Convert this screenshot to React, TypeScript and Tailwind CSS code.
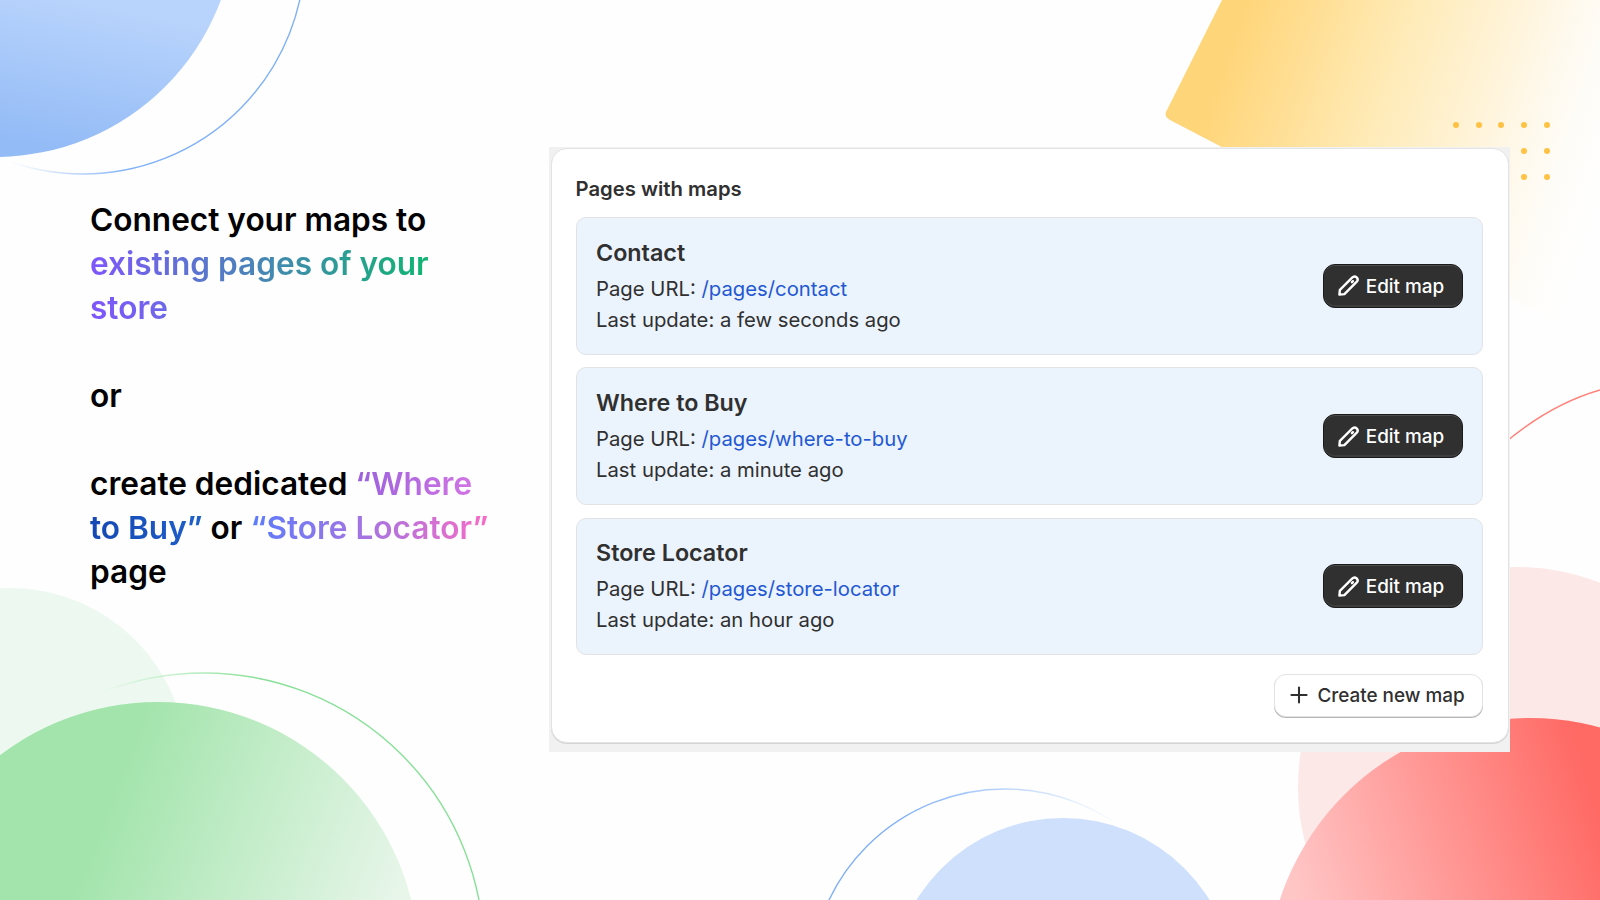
import { Plus } from "lucide-react";

type PageRow = {
  title: string;
  url: string;
  updated: string;
};

const pages: PageRow[] = [
  { title: "Contact", url: "/pages/contact", updated: "a few seconds ago" },
  { title: "Where to Buy", url: "/pages/where-to-buy", updated: "a minute ago" },
  { title: "Store Locator", url: "/pages/store-locator", updated: "an hour ago" },
];

const dots = [
  [1456, 125],
  [1479, 125],
  [1501, 125],
  [1524, 125],
  [1547, 125],
  [1524, 151],
  [1547, 151],
  [1524, 177],
  [1547, 177],
];

function Backdrop() {
  return (
    <svg className="absolute inset-0" width="1600" height="900" viewBox="0 0 1600 900" fill="none">
      <defs>
        <linearGradient id="blueFill" gradientUnits="userSpaceOnUse" x1="60" y1="150" x2="90" y2="0">
          <stop offset="0" stopColor="#93bbf6" />
          <stop offset="1" stopColor="#b9d4fc" />
        </linearGradient>
        <linearGradient id="blueRing" gradientUnits="userSpaceOnUse" x1="10" y1="165" x2="200" y2="130">
          <stop offset="0" stopColor="#8fb9f6" stopOpacity="0" />
          <stop offset="0.6" stopColor="#7fb0f7" />
        </linearGradient>
        <linearGradient id="yellowFill" gradientUnits="userSpaceOnUse" x1="1225" y1="60" x2="1610" y2="190">
          <stop offset="0" stopColor="#ffd579" />
          <stop offset="0.4" stopColor="#ffebb8" />
          <stop offset="0.7" stopColor="#fff6e2" />
          <stop offset="1" stopColor="#fffdf9" stopOpacity="0" />
        </linearGradient>
        <linearGradient id="greenFill" gradientUnits="userSpaceOnUse" x1="110" y1="790" x2="400" y2="900">
          <stop offset="0" stopColor="#a2e4ab" />
          <stop offset="1" stopColor="#e8f6ea" />
        </linearGradient>
        <linearGradient id="greenRing" gradientUnits="userSpaceOnUse" x1="100" y1="690" x2="260" y2="690">
          <stop offset="0" stopColor="#86e096" stopOpacity="0" />
          <stop offset="1" stopColor="#86e096" />
        </linearGradient>
        <linearGradient id="redFill" gradientUnits="userSpaceOnUse" x1="1290" y1="880" x2="1590" y2="790">
          <stop offset="0" stopColor="#ffc6c6" />
          <stop offset="1" stopColor="#ff6a65" />
        </linearGradient>
        <linearGradient id="lowerBlueRing" gradientUnits="userSpaceOnUse" x1="900" y1="820" x2="1118" y2="820">
          <stop offset="0" stopColor="#7fb0f7" />
          <stop offset="1" stopColor="#7fb0f7" stopOpacity="0" />
        </linearGradient>
      </defs>

      {/* top left */}
      <circle cx="-5" cy="-84" r="241" fill="url(#blueFill)" />
      <circle cx="83" cy="-48" r="222" stroke="url(#blueRing)" strokeWidth="1.4" />

      {/* top right */}
      <path
        d="M1223 -2 L1167 110 Q1163 116 1170 120 L1600 345 L1640 -2 Z"
        fill="url(#yellowFill)"
      />
      {dots.map(([x, y]) => (
        <circle key={`${x}-${y}`} cx={x} cy={y} r="3" fill="#ffc245" />
      ))}

      {/* bottom left */}
      <circle cx="10" cy="765" r="177" fill="#edf9f0" />
      <circle cx="204" cy="953" r="280" stroke="url(#greenRing)" strokeWidth="1.4" />
      <circle cx="158" cy="963" r="261" fill="url(#greenFill)" />

      {/* bottom middle */}
      <circle cx="1005" cy="984" r="195" stroke="url(#lowerBlueRing)" strokeWidth="1.4" />
      <circle cx="1063" cy="990" r="172" fill="#cfe0fc" />

      {/* right edge */}
      <path d="M1500 447 Q1548 405 1600 390" stroke="#ff8078" strokeWidth="1.4" />
      <circle cx="1518" cy="787" r="220" fill="#fde8e8" />
      <circle cx="1530" cy="981" r="263" fill="url(#redFill)" />
    </svg>
  );
}

function EditIcon() {
  return (
    <svg width="23" height="23" viewBox="0 0 24 24" fill="none" stroke="currentColor" strokeWidth="2.5" strokeLinejoin="round" strokeLinecap="round">
      <path d="M2.5 21.5 L3 16.5 L15.8 3.8 C17.2 2.4 19.2 2.4 20.5 3.6 C21.8 4.9 21.8 6.9 20.4 8.3 L7.7 21 Z" />
      <path d="M15.6 8.5 L16.6 7.5" />
    </svg>
  );
}

function PageCard({ row }: { row: PageRow }) {
  return (
    <div className="flex h-[137.6px] items-center justify-between rounded-[10px] border border-[#e1e3e5] bg-[#ebf3fd] pl-[19.5px] pr-[19px]">
      <div>
        <h3 className="text-[23.3px] leading-[34px] font-semibold text-[#303030]">{row.title}</h3>
        <p className="mt-[3px] text-[20.3px] leading-[32px] text-[#303030]">
          Page URL: <a className="text-[#2358d3]">{row.url}</a>
        </p>
        <p className="pb-[1px] text-[20.3px] leading-[30px] text-[#303030]">Last update: {row.updated}</p>
      </div>
      <button
        type="button"
        className="flex h-[44px] w-[140px] items-center justify-center gap-[6px] rounded-[12px] border border-[#1a1a1a] bg-[#303030] pr-[4px] text-[18.9px] font-medium text-white shadow-[inset_0_1px_0_#4d4d4d,inset_0_-2px_0_#3d3d3d]"
      >
        <EditIcon />
        <span className="pt-[2px]">Edit map</span>
      </button>
    </div>
  );
}

export default function App() {
  return (
    <div className="relative h-[900px] w-[1600px] overflow-hidden bg-[#fefefe] font-['Inter',sans-serif]">
      <Backdrop />
      <div className="relative flex">
        <div className="w-[549px] pt-[198px] pl-[90px] text-[31.6px] leading-[44px] font-semibold text-black">
          <p>Connect your maps to</p>
          <p>
            <span className="bg-[linear-gradient(90deg,#7f56fb,#0fb571)] bg-clip-text text-transparent">
              existing pages of your
            </span>
          </p>
          <p>
            <span className="bg-[linear-gradient(90deg,#7f56fb,#6c68e8)] bg-clip-text text-transparent">store</span>
          </p>
          <p className="mt-[44px]">or</p>
          <p className="mt-[44px]">
            create dedicated{" "}
            <span className="bg-[linear-gradient(90deg,#9a62dd,#d173e4)] bg-clip-text text-transparent">
              “Where
            </span>
          </p>
          <p>
            <span className="bg-[linear-gradient(90deg,#1548b3,#1e60ca)] bg-clip-text text-transparent">to Buy”</span> or{" "}
            <span className="bg-[linear-gradient(90deg,#5a7cfc,#f66cc6)] bg-clip-text text-transparent">
              “Store Locator”
            </span>
          </p>
          <p>page</p>
        </div>

        <div className="mt-[147px] h-[605px] w-[961px] bg-[#f1f1f1] pt-[1px] pl-[1.5px]">
          <div className="h-[595px] w-[958px] rounded-[16px] border border-[#e3e3e3] bg-white pr-[25px] pl-[24px] shadow-[0_1px_0_#d4d4d4]">
            <h2 className="mt-[24px] text-[20.3px] leading-[32px] font-semibold text-[#303030]">Pages with maps</h2>
            <div className="mt-[12px] flex flex-col gap-[12.7px]">
              {pages.map((row) => (
                <PageCard key={row.title} row={row} />
              ))}
            </div>
            <div className="mt-[18.5px] flex justify-end">
              <button
                type="button"
                className="flex h-[43px] w-[209px] items-center justify-center gap-[5px] rounded-[12px] border border-[#e3e3e3] bg-white pt-[3px] pr-[5px] text-[18.9px] font-medium text-[#303030] shadow-[0_1px_0_#b5b5b5]"
              >
                <Plus size={26} strokeWidth={1.9} className="-mt-[3px]" />
                Create new map
              </button>
            </div>
          </div>
        </div>
      </div>
    </div>
  );
}
